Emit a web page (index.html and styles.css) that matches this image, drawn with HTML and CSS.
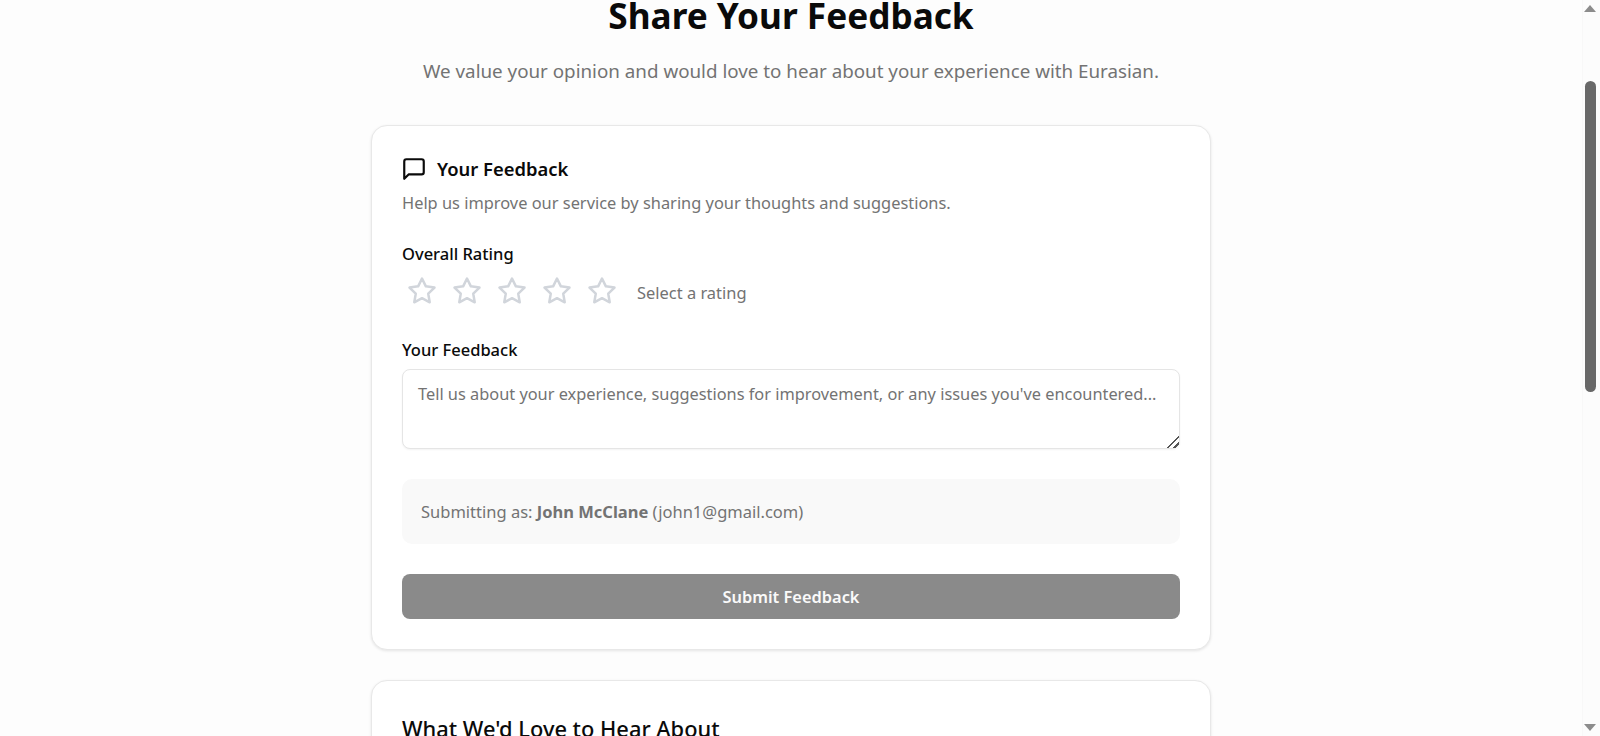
FILE: index.html
```html
<!DOCTYPE html>
<html lang="en">
<head>
<meta charset="UTF-8">
<meta name="viewport" content="width=device-width, initial-scale=1.0">
<title>Share Your Feedback</title>
<link rel="stylesheet" href="styles.css">
</head>
<body>
<div class="app">
    <main class="page">
        <h1>Share Your Feedback</h1>
        <p class="intro">We value your opinion and would love to hear about your experience with Eurasian.</p>

        <section class="card">
            <h2 class="card-title">
                <svg class="title-icon" viewBox="0 0 24 24" fill="none" stroke="currentColor" stroke-width="2" stroke-linecap="round" stroke-linejoin="round">
                    <path d="M21 15a2 2 0 0 1-2 2H7l-4 4V5a2 2 0 0 1 2-2h14a2 2 0 0 1 2 2z"/>
                </svg>
                Your Feedback
            </h2>
            <p class="card-desc">Help us improve our service by sharing your thoughts and suggestions.</p>

            <label class="field-label">Overall Rating</label>
            <div class="rating">
                <div class="stars">
                    <svg class="star" viewBox="0 0 24 24"><polygon points="12 2 15.09 8.26 22 9.27 17 14.14 18.18 21.02 12 17.77 5.82 21.02 7 14.14 2 9.27 8.91 8.26 12 2"/></svg>
                    <svg class="star" viewBox="0 0 24 24"><polygon points="12 2 15.09 8.26 22 9.27 17 14.14 18.18 21.02 12 17.77 5.82 21.02 7 14.14 2 9.27 8.91 8.26 12 2"/></svg>
                    <svg class="star" viewBox="0 0 24 24"><polygon points="12 2 15.09 8.26 22 9.27 17 14.14 18.18 21.02 12 17.77 5.82 21.02 7 14.14 2 9.27 8.91 8.26 12 2"/></svg>
                    <svg class="star" viewBox="0 0 24 24"><polygon points="12 2 15.09 8.26 22 9.27 17 14.14 18.18 21.02 12 17.77 5.82 21.02 7 14.14 2 9.27 8.91 8.26 12 2"/></svg>
                    <svg class="star" viewBox="0 0 24 24"><polygon points="12 2 15.09 8.26 22 9.27 17 14.14 18.18 21.02 12 17.77 5.82 21.02 7 14.14 2 9.27 8.91 8.26 12 2"/></svg>
                </div>
                <span class="rating-text">Select a rating</span>
            </div>

            <label class="field-label" for="feedback">Your Feedback</label>
            <textarea id="feedback" class="feedback-box" placeholder="Tell us about your experience, suggestions for improvement, or any issues you've encountered..."></textarea>

            <div class="submitter">Submitting as: <strong>John McClane</strong> (john1@gmail.com)</div>

            <button class="submit-btn" type="button">Submit Feedback</button>
        </section>

        <section class="card card-topics">
            <h2 class="topics-title">What We'd Love to Hear About</h2>
        </section>
    </main>

    <div class="scrollbar">
        <span class="arrow-up"></span>
        <div class="thumb"></div>
        <span class="arrow-down"></span>
    </div>
</div>
</body>
</html>
```

FILE: styles.css
```css
* {
    box-sizing: border-box;
}

html, body {
    height: 100%;
    margin: 0;
    overflow: hidden;
}

body {
    font-family: "Noto Sans", "Open Sans", sans-serif;
    background-color: #fdfdfd;
    color: #0a0a0a;
}

.app {
    display: flex;
    height: 736px;
}

.page {
    flex: 1;
    height: 736px;
    overflow: hidden;
    display: flex;
    flex-direction: column;
    align-items: center;
}

h1 {
    margin: -5px 0 0;
    font-size: 35.2px;
    line-height: 40px;
    font-weight: 700;
}

.intro {
    margin: 22px 0 0;
    font-size: 18.8px;
    line-height: 28px;
    color: #737373;
}

.card {
    flex-shrink: 0;
    width: 840px;
    margin-top: 30px;
    padding: 30px;
    background-color: #ffffff;
    border: 1px solid #e8e8e8;
    border-radius: 16px;
    box-shadow: 0 1px 3px rgba(0, 0, 0, 0.1);
}

.intro + .card {
    margin-top: 40px;
}

.card-topics {
    min-height: 300px;
}

.card-title {
    display: flex;
    align-items: center;
    gap: 10px;
    margin: 0;
    font-size: 18.4px;
    line-height: 26px;
    font-weight: 600;
}

.topics-title {
    margin: 0;
    font-size: 21.85px;
    line-height: 36px;
    font-weight: 500;
}

.title-icon {
    width: 26px;
    height: 26px;
    margin-left: -1px;
}

.card-desc {
    margin: 9px 0 0;
    font-size: 16.4px;
    line-height: 24px;
    color: #737373;
}

.field-label {
    display: block;
    font-size: 16.5px;
    line-height: 24px;
    font-weight: 500;
}

.card-desc + .field-label {
    margin-top: 27px;
}

.rating {
    display: flex;
    align-items: center;
    gap: 15px;
    margin: 10px 0 32px;
}

.stars {
    display: flex;
    gap: 5px;
}

.star {
    width: 40px;
    height: 30px;
    fill: none;
    stroke: #d1d5db;
    stroke-width: 2;
    stroke-linejoin: round;
    stroke-linecap: round;
}

.rating-text {
    padding-top: 4px;
    font-size: 16.45px;
    line-height: 24px;
    color: #737373;
}

.feedback-box {
    display: block;
    width: 100%;
    height: 80px;
    margin-top: 7px;
    padding: 12px 15px 8px;
    font-family: inherit;
    font-size: 16.35px;
    line-height: 24px;
    background-color: #ffffff;
    border: 1px solid #e5e5e5;
    border-radius: 8px;
    box-shadow: 0 1px 2px rgba(0, 0, 0, 0.05);
    outline: none;
}

.feedback-box::placeholder {
    color: #737373;
    opacity: 1;
}

.feedback-box::-webkit-resizer {
    background: linear-gradient(135deg, transparent 58%, #555 58% 65%, transparent 65% 80%, #555 80% 87%, transparent 87%);
}

.submitter {
    margin-top: 30px;
    padding: 20px 19px 20px;
    height: 65px;
    font-size: 16.5px;
    line-height: 25px;
    color: #737373;
    background-color: #f9f9f9;
    border-radius: 10px;
}

.submit-btn {
    display: block;
    width: 100%;
    height: 45px;
    margin-top: 30px;
    font-family: inherit;
    font-size: 16.4px;
    font-weight: 600;
    color: #fafafa;
    background-color: #8a8a8a;
    border: none;
    border-radius: 8px;
}

/* window scrollbar, page is shown scrolled */
.scrollbar {
    position: relative;
    flex: 0 0 18px;
    height: 736px;
    background-color: #fcfcfc;
    border-left: 1px solid #f8f8f8;
}

.thumb {
    position: absolute;
    left: 2px;
    top: 81px;
    width: 11px;
    height: 311px;
    background-color: #686868;
    border-radius: 6px;
}

.arrow-up,
.arrow-down {
    position: absolute;
    left: 1px;
    width: 0;
    height: 0;
    border-left: 6.5px solid transparent;
    border-right: 6.5px solid transparent;
}

.arrow-up {
    top: 5px;
    border-bottom: 7px solid #8c8c8c;
}

.arrow-down {
    bottom: 5px;
    border-top: 7px solid #8c8c8c;
}
```
